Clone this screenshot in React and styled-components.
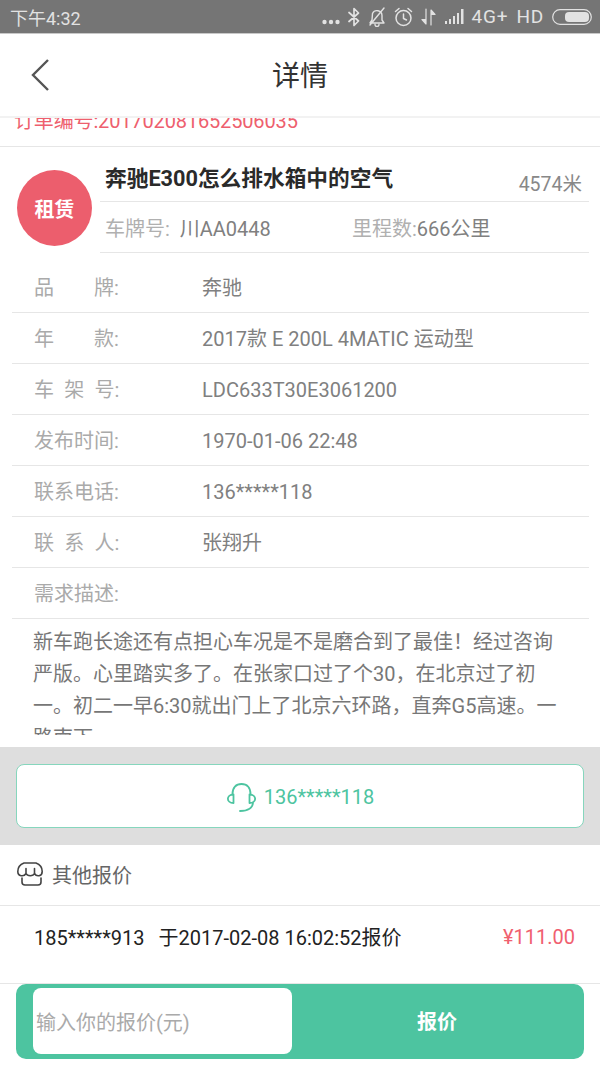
import styled, { createGlobalStyle } from "styled-components"

const GlobalStyle = createGlobalStyle`
  html, body {
    margin: 0;
    padding: 0;
    background: #fff;
  }
  * {
    box-sizing: border-box;
  }
`

const Page = styled.div`
  width: 600px;
  height: 1067px;
  overflow: hidden;
  display: flex;
  flex-direction: column;
  background: #fff;
  font-family: Roboto, "Noto Sans CJK SC", sans-serif;
`

const StatusBar = styled.div`
  height: 34px;
  flex: none;
  display: flex;
  align-items: center;
  justify-content: space-between;
  padding: 0 8px 0 10px;
  background: #757575;
  border-bottom: 1px solid #c8c8c8;
  color: #e2e2e2;
`

const StatusTime = styled.span`
  font-size: 18px;
`

const StatusIcons = styled.div`
  display: flex;
  align-items: center;
  gap: 8px;
`

const NetText = styled.span`
  font-size: 19px;
  letter-spacing: 0.8px;
`

const Dots = styled.svg`
  margin-top: 10px;
`

const Header = styled.header`
  height: 84px;
  flex: none;
  position: relative;
  display: flex;
  align-items: center;
  justify-content: center;
  padding-bottom: 2px;
  border-bottom: 2px solid #f2f2f2;
`

const BackIcon = styled.svg`
  position: absolute;
  left: 30px;
  top: 24px;
`

const HeaderTitle = styled.h1`
  margin: 0;
  font-size: 28px;
  font-weight: 400;
  color: #333;
`

const Scroller = styled.main`
  height: 617px;
  flex: none;
  margin-bottom: 12px;
  overflow: hidden;
`

const OrderRow = styled.div`
  height: 41px;
  margin-top: -12px;
  padding-left: 14px;
  line-height: 30px;
  font-size: 20px;
  letter-spacing: -0.15px;
  color: #ee5f6e;
  border-bottom: 1px solid #e6e6e6;
`

const Card = styled.section`
  display: flex;
  align-items: flex-start;
  padding: 23px 11px 0 17px;
`

const Badge = styled.div`
  width: 75px;
  height: 76px;
  flex: none;
  border-radius: 50%;
  display: flex;
  align-items: center;
  justify-content: center;
  background: #ec5e6d;
  color: #fff;
  font-size: 20px;
  font-weight: 700;
`

const CardBody = styled.div`
  flex: 1;
  min-width: 0;
  margin-left: 8px;
  margin-top: -23px;
`

const CardTop = styled.div`
  height: 55px;
  display: flex;
  align-items: center;
  justify-content: space-between;
  padding: 9px 7px 0 5px;
  border-bottom: 1px solid #e6e6e6;
`

const CardTitle = styled.div`
  font-size: 21.7px;
  font-weight: 700;
  color: #2a2a2a;
  margin-top: -4px;
`

const Distance = styled.div`
  font-size: 19.5px;
  color: #888;
  margin-top: 8px;
`

const CardBottom = styled.div`
  height: 51px;
  display: flex;
  align-items: center;
  padding-left: 5px;
  font-size: 20px;
  border-bottom: 1px solid #e6e6e6;
`

const CardCell = styled.div`
  width: 247px;
  flex: none;
  white-space: pre;
`

const Muted = styled.span`
  color: #b0b0b0;
`

const Value = styled.span`
  color: #808080;
`

const InfoList = styled.div`
  padding: 9px 11px 0 12px;
`

const InfoRow = styled.div`
  height: 51px;
  display: flex;
  align-items: baseline;
  padding: 2px 0 0 22px;
  font-size: 20px;
  line-height: 48px;
  border-bottom: 1px solid #e6e6e6;
`

const InfoLabel = styled.span`
  width: 168px;
  color: #aaa;
  white-space: pre;
`

const InfoValue = styled.span`
  color: #808080;
`

const Description = styled.p`
  margin: 7px 0 0;
  padding: 0 30px 0 33px;
  font-size: 20px;
  line-height: 32px;
  color: #777;
`

const ContactBand = styled.div`
  height: 98px;
  flex: none;
  display: flex;
  align-items: center;
  padding: 0 16px;
  background: #dedede;
`

const ContactButton = styled.div`
  width: 100%;
  height: 64px;
  display: flex;
  align-items: center;
  justify-content: center;
  gap: 8px;
  padding-top: 2px;
  border: 1px solid #86d6bd;
  border-radius: 8px;
  background: #fff;
  color: #4dc4a0;
  font-size: 20px;
`

const OffersHead = styled.div`
  height: 61px;
  flex: none;
  display: flex;
  align-items: center;
  gap: 9px;
  padding: 0 0 2px 17px;
  border-bottom: 1px solid #e6e6e6;
  color: #666;
  font-size: 20px;
`

const OfferRow = styled.div`
  height: 78px;
  flex: none;
  display: flex;
  align-items: center;
  justify-content: space-between;
  padding: 0 25px 16px 34px;
  border-bottom: 1px solid #e6e6e6;
  font-size: 20px;
  color: #222;
`

const OfferInfo = styled.div`
  display: flex;
  align-items: baseline;
  gap: 14px;
`

const Price = styled.span`
  color: #f0606f;
`

const QuoteBar = styled.div`
  height: 75px;
  margin: 0 16px;
  flex: none;
  display: flex;
  align-items: flex-start;
  padding: 4px 0 0 17px;
  border-radius: 10px;
  background: #4dc4a0;
`

const QuoteInput = styled.div`
  width: 259px;
  height: 66px;
  flex: none;
  display: flex;
  align-items: center;
  padding-left: 3px;
  border-radius: 8px;
  background: #fff;
  color: #aaa;
  font-size: 20px;
`

const QuoteButton = styled.div`
  flex: 1;
  line-height: 68px;
  margin-left: -2px;
  text-align: center;
  color: #fff;
  font-size: 20px;
  font-weight: 700;
`

const rows = [
  ["品\u3000\u3000牌:", "奔驰"],
  ["年\u3000\u3000款:", "2017款 E 200L 4MATIC 运动型"],
  ["车\u2002架\u2002号:", "LDC633T30E3061200"],
  ["发布时间:", "1970-01-06 22:48"],
  ["联系电话:", "136*****118"],
  ["联\u2002系\u2002人:", "张翔升"],
  ["需求描述:", ""],
]

const line = { fill: "none", stroke: "currentColor", strokeLinecap: "round", strokeLinejoin: "round" }

function StatusIconSet() {
  return (
    <StatusIcons>
      <Dots width="18" height="6" viewBox="0 0 18 6">
        <circle cx="2.5" cy="3" r="2.2" fill="currentColor" />
        <circle cx="9" cy="3" r="2.2" fill="currentColor" />
        <circle cx="15.5" cy="3" r="2.2" fill="currentColor" />
      </Dots>
      <svg width="12" height="20" viewBox="0 0 12 20">
        <path d="M1 5.5 10.5 14 6 18.5V1.5L10.5 6 1 14.5" {...line} strokeWidth="1.7" />
      </svg>
      <svg width="18" height="20" viewBox="0 0 18 20">
        <path d="M2 16h14l-2-3V8.5a5 5 0 0 0-9.5-2L4 13z M7 17.5a2 2 0 0 0 4 0 M2 18 16 1" {...line} strokeWidth="1.4" />
      </svg>
      <svg width="19" height="20" viewBox="0 0 19 20">
        <circle cx="9.5" cy="11" r="7.5" {...line} strokeWidth="1.5" />
        <path d="M9.5 7v4.5l3 1.5 M1.5 4.5 5 1.5 M17.5 4.5 14 1.5" {...line} strokeWidth="1.5" />
      </svg>
      <svg width="15" height="18" viewBox="0 0 15 18">
        <path d="M5 1v15L1 11.5h4z M10 17V2l4 4.5h-4z" fill="currentColor" stroke="currentColor" strokeWidth="1.2" strokeLinejoin="round" />
      </svg>
      <svg width="20" height="15" viewBox="0 0 20 15">
        <path d="M1 12h2v3H1z M5 10h2v5H5z M9 7h2v8H9z M13 4h2v11h-2z M17 0h2.5v15H17z" fill="currentColor" />
      </svg>
      <NetText>4G+</NetText>
      <NetText>HD</NetText>
      <svg width="40" height="16" viewBox="0 0 40 16">
        <rect x="0.7" y="0.7" width="38.6" height="14.6" rx="7.3" {...line} strokeWidth="1.2" />
        <rect x="13" y="3" width="24" height="10" rx="4" fill="currentColor" />
      </svg>
    </StatusIcons>
  )
}

function HeadsetIcon() {
  return (
    <svg width="30" height="29" viewBox="0 0 30 29">
      <path d="M6.5 11C6.5 4.5 10 1 15.5 1S24.5 4.5 24.5 11 M27 20C26.5 25 22.5 28 14 28" {...line} strokeWidth="1.8" />
      <path d="M7.5 11.5C0 11.5 0 20 7.5 20Z M23.5 11.5C31 11.5 31 20 23.5 20Z" {...line} strokeWidth="1.8" />
    </svg>
  )
}

function StoreIcon() {
  return (
    <svg width="26" height="24" viewBox="0 0 26 24" color="#444">
      <path d="M7 1H19C23 2.5 25.2 6 25.2 9.5C25.2 14.5 19.5 15 17.5 11.5C16 14.5 10.5 14.5 9 11.5C7 15 .8 14.5 .8 9.5C.8 6 3 2.5 7 1Z M9 11.5V6.5 M17.5 11.5V6.5 M5 16V20Q5 23 8 23H21Q24 23 24 20V16" {...line} strokeWidth="1.6" />
    </svg>
  )
}

export default function App() {
  return (
    <Page>
      <GlobalStyle />
      <StatusBar>
        <StatusTime>下午4:32</StatusTime>
        <StatusIconSet />
      </StatusBar>
      <Header>
        <BackIcon width="20" height="34" viewBox="0 0 20 34">
          <path d="M18 2 3 17l15 15" fill="none" stroke="#555" strokeWidth="2.4" />
        </BackIcon>
        <HeaderTitle>详情</HeaderTitle>
      </Header>
      <Scroller>
        <OrderRow>订单编号:201702081652506035</OrderRow>
        <Card>
          <Badge>租赁</Badge>
          <CardBody>
            <CardTop>
              <CardTitle>奔驰E300怎么排水箱中的空气</CardTitle>
              <Distance>4574米</Distance>
            </CardTop>
            <CardBottom>
              <CardCell><Muted>车牌号:  </Muted><Value>川AA0448</Value></CardCell>
              <CardCell><Muted>里程数:</Muted><Value>666公里</Value></CardCell>
            </CardBottom>
          </CardBody>
        </Card>
        <InfoList>
          {rows.map(([label, value]) => (
            <InfoRow key={label}>
              <InfoLabel>{label}</InfoLabel>
              <InfoValue>{value}</InfoValue>
            </InfoRow>
          ))}
        </InfoList>
        <Description>
          新车跑长途还有点担心车况是不是磨合到了最佳！经过咨询严版。心里踏实多了。在张家口过了个30，在北京过了初一。初二一早6:30就出门上了北京六环路，直奔G5高速。一路南下。
        </Description>
      </Scroller>
      <ContactBand>
        <ContactButton>
          <HeadsetIcon />
          136*****118
        </ContactButton>
      </ContactBand>
      <OffersHead>
        <StoreIcon />
        其他报价
      </OffersHead>
      <OfferRow>
        <OfferInfo>
          <span>185*****913</span>
          <span>于2017-02-08 16:02:52报价</span>
        </OfferInfo>
        <Price>¥111.00</Price>
      </OfferRow>
      <QuoteBar>
        <QuoteInput>输入你的报价(元)</QuoteInput>
        <QuoteButton>报价</QuoteButton>
      </QuoteBar>
    </Page>
  )
}
